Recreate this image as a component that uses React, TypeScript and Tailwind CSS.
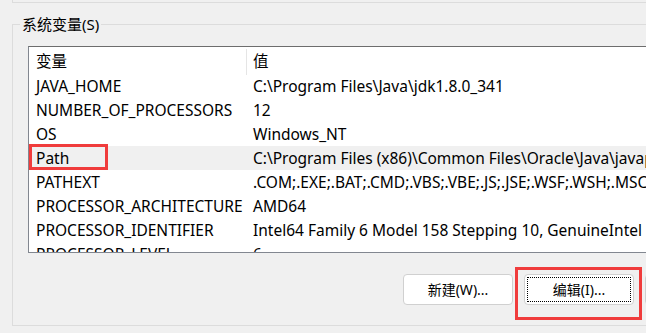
const rows: [string, string][] = [
  ["JAVA_HOME", "C:\\Program Files\\Java\\jdk1.8.0_341"],
  ["NUMBER_OF_PROCESSORS", "12"],
  ["OS", "Windows_NT"],
  ["Path", "C:\\Program Files (x86)\\Common Files\\Oracle\\Java\\javapath;C:\\WINDOWS\\system32"],
  ["PATHEXT", ".COM;.EXE;.BAT;.CMD;.VBS;.VBE;.JS;.JSE;.WSF;.WSH;.MSC"],
  ["PROCESSOR_ARCHITECTURE", "AMD64"],
  ["PROCESSOR_IDENTIFIER", "Intel64 Family 6 Model 158 Stepping 10, GenuineIntel"],
  ["PROCESSOR_LEVEL", "6"],
];

export default function App() {
  return (
    <div
      className="w-[646px] h-[333px] overflow-hidden bg-[#f0f0f0] text-black"
      style={{ fontFamily: '"Noto Sans", "Noto Sans CJK SC", sans-serif' }}
    >
      {/* bottom of the group above */}
      <div className="ml-[12px] h-[3px] w-[700px] border-l border-b border-[#dcdcdc]" />

      {/* 系统变量 group */}
      <div className="relative mt-[21px] ml-[12px] w-[700px] h-[302px] border border-[#dcdcdc] pt-[21px] pl-[15px]">
        <span className="absolute left-[7px] top-[-12px] bg-[#f0f0f0] px-[2px] text-[15px] leading-[22px]">
          系统变量(S)
        </span>

        <div className="w-[700px] h-[207px] overflow-hidden bg-white border border-[#828790] border-t-[#6d6d6d] text-[15.5px]">
          <div className="flex h-[27px] items-center pt-[2px]">
            <div className="w-[217px] shrink-0 pl-[7px]">变量</div>
            <div className="h-[26px] border-l border-[#e5e5e5]" />
            <div className="pl-[6px]">值</div>
          </div>
          {rows.map(([name, value]) => (
            <div
              key={name}
              className={`relative flex h-[24px] items-center pt-[2px] whitespace-nowrap ${
                name === "Path" ? "bg-[#f0f0f0]" : ""
              }`}
            >
              <div className="w-[218px] shrink-0 pl-[7px]">{name}</div>
              <div className="pl-[6px]">{value}</div>
              {name === "Path" && (
                <div className="absolute left-0 top-[-2px] w-[79px] h-[26px] border-[3px] border-[#f03c3c]" />
              )}
            </div>
          ))}
        </div>

        <div className="flex gap-[11px] mt-[21px] ml-[375px] text-[14px]">
          <button className="shrink-0 w-[110px] h-[31px] rounded-[4px] bg-white border border-[#d0d0d0]">
            新建(W)...
          </button>
          <div className="relative shrink-0">
            <button className="w-[110px] h-[31px] rounded-[4px] bg-white border border-[#d0d0d0] p-[2px]">
              <span className="flex h-full w-full items-center justify-center border border-dotted border-black">
                编辑(I)...
              </span>
            </button>
            <div className="absolute left-[-9px] top-[-7px] w-[127px] h-[53px] border-[3px] border-[#f03c3c]" />
          </div>
          <button className="shrink-0 w-[110px] h-[31px] rounded-[4px] bg-white border border-[#d0d0d0]">
            删除(L)
          </button>
        </div>
      </div>
    </div>
  );
}
